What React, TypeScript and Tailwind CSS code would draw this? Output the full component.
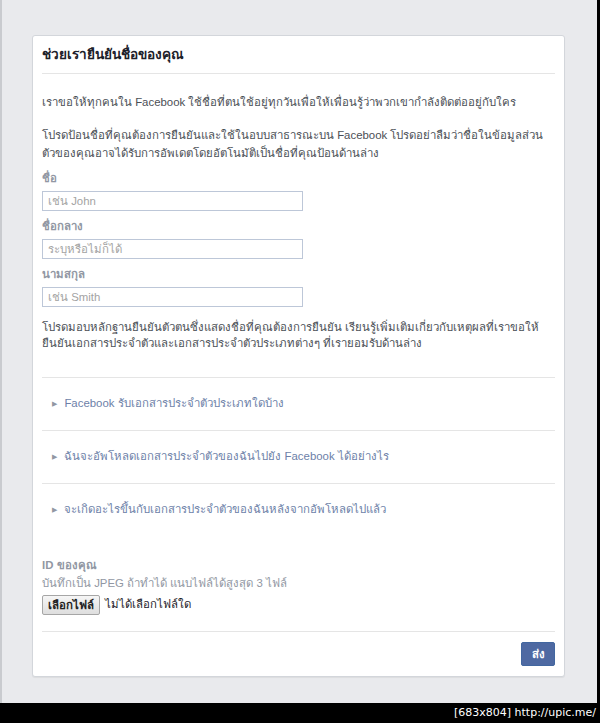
const font = { fontFamily: 'Tahoma, "Liberation Sans", "Noto Sans", "DejaVu Sans", sans-serif' };

function Divider() {
  return <div className="h-px w-full bg-[#e5e5e5]" />;
}

function Field({ label, placeholder, first }: { label: string; placeholder: string; first?: boolean }) {
  return (
    <div className={first ? 'mt-[7px]' : 'mt-[6px]'}>
      <div className="h-[18px] text-[11.4px] font-bold leading-[18px] text-[#9197a3]">{label}</div>
      <input
        type="text"
        placeholder={placeholder}
        className="mt-[4px] block h-[20px] w-[261px] border border-[#bdc7d8] bg-white px-[5px] text-[11.4px] leading-[18px] text-[#1d2129] outline-none placeholder:text-[#a3a3a3]"
      />
    </div>
  );
}

function FaqItem({ text }: { text: string }) {
  return (
    <div className="flex h-[52px] items-center gap-[7px] pl-[10px] text-[11.4px] text-[#6d7fa8]">
      <span className="text-[7px] text-[#9197a3]">▶</span>
      <span className="whitespace-nowrap">{text}</span>
    </div>
  );
}

export default function App() {
  return (
    <div className="flex h-[723px] w-[600px] flex-col bg-black" style={font}>
      <div className="flex flex-1 border-l-2 border-r-[3px] border-l-[#c9cbcf] border-r-black bg-[#e9eaed]">
        <div className="ml-[30px] mt-[35px] h-[642px] w-[533px] overflow-hidden rounded-[3px] border border-[#d3d6db] bg-white px-[9px] shadow-[0_1px_1px_rgba(0,0,0,0.06)]">
          <div className="flex h-[38px] items-center border-b border-[#e5e5e5]">
            <h1 className="text-[13.6px] font-bold leading-[18px] text-[#1d2129]">ช่วยเรายืนยันชื่อของคุณ</h1>
          </div>

          <p className="mt-[19px] h-[18px] whitespace-nowrap text-[11.4px] leading-[18px] text-[#4b4f56]">
            เราขอให้ทุกคนใน Facebook ใช้ชื่อที่ตนใช้อยู่ทุกวันเพื่อให้เพื่อนรู้ว่าพวกเขากำลังติดต่ออยู่กับใคร
          </p>
          <p className="mt-[15px] h-[36px] whitespace-nowrap text-[11.4px] leading-[18px] text-[#4b4f56]">
            โปรดป้อนชื่อที่คุณต้องการยืนยันและใช้ในอบบสาธารณะบน Facebook โปรดอย่าลืมว่าชื่อในข้อมูลส่วน
            <br />
            ตัวของคุณอาจได้รับการอัพเดตโดยอัตโนมัติเป็นชื่อที่คุณป้อนด้านล่าง
          </p>

          <Field first label="ชื่อ" placeholder="เช่น John" />
          <Field label="ชื่อกลาง" placeholder="ระบุหรือไม่ก็ได้" />
          <Field label="นามสกุล" placeholder="เช่น Smith" />

          <p className="mt-[12px] h-[32px] whitespace-nowrap text-[11.4px] leading-[16px] text-[#4b4f56]">
            โปรดมอบหลักฐานยืนยันตัวตนซึ่งแสดงชื่อที่คุณต้องการยืนยัน เรียนรู้เพิ่มเติมเกี่ยวกับเหตุผลที่เราขอให้
            <br />
            ยืนยันเอกสารประจำตัวและเอกสารประจำตัวประเภทต่างๆ ที่เรายอมรับด้านล่าง
          </p>

          <div className="mt-[26px]">
            <Divider />
            <FaqItem text="Facebook รับเอกสารประจำตัวประเภทใดบ้าง" />
            <Divider />
            <FaqItem text="ฉันจะอัพโหลดเอกสารประจำตัวของฉันไปยัง Facebook ได้อย่างไร" />
            <Divider />
            <FaqItem text="จะเกิดอะไรขึ้นกับเอกสารประจำตัวของฉันหลังจากอัพโหลดไปแล้ว" />
          </div>

          <div className="mt-[20px]">
            <div className="h-[18px] text-[11.4px] font-bold leading-[18px] text-[#9197a3]">ID ของคุณ</div>
            <div className="h-[18px] text-[11.4px] leading-[18px] text-[#9197a3]">บันทึกเป็น JPEG ถ้าทำได้ แนบไฟล์ได้สูงสุด 3 ไฟล์</div>
            <div className="mt-[3px] flex h-[20px] items-center gap-[5px] text-[11.4px] text-[#1d2129]">
              <button
                type="button"
                className="h-[20px] rounded-[2px] border border-[#a6a6a6] bg-gradient-to-b from-[#f6f6f6] to-[#dedede] px-[5px] text-[11.4px] font-bold leading-[16px] text-[#222]"
              >
                เลือกไฟล์
              </button>
              <span>ไม่ได้เลือกไฟล์ใด</span>
            </div>
          </div>

          <div className="mt-[16px]">
            <Divider />
          </div>
          <div className="flex justify-end pt-[10px]">
            <button
              type="button"
              className="h-[24px] w-[34px] rounded-[2px] border border-[#4267a0] bg-[#4e69a2] text-[11.4px] font-bold leading-[16px] text-white"
            >
              ส่ง
            </button>
          </div>
        </div>
      </div>
      <div className="flex h-[20px] items-center justify-end pr-[4px] text-[11px] text-white" style={{ fontFamily: '"DejaVu Sans", sans-serif' }}>
        [683x804] http://upic.me/
      </div>
    </div>
  );
}
